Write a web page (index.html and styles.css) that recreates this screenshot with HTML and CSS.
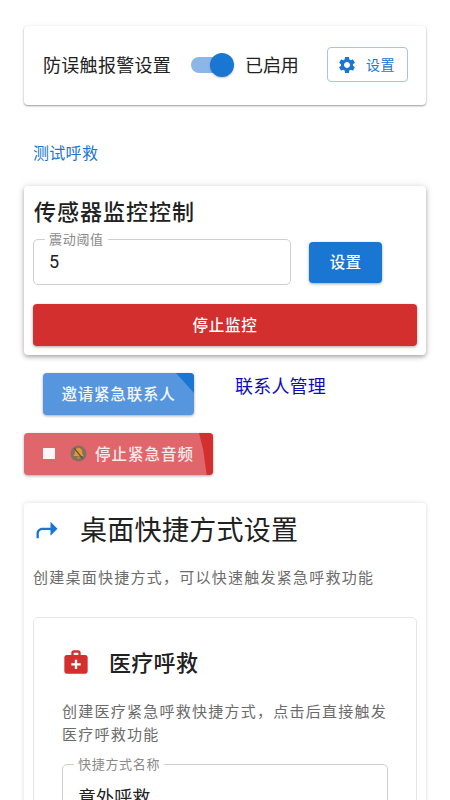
FILE: index.html
```html
<!DOCTYPE html>
<html lang="zh">
<head>
<meta charset="utf-8">
<title>设置</title>
<link rel="stylesheet" href="styles.css">
</head>
<body>
<main class="page">
  <section class="card alarm">
    <span class="alarm-title">防误触报警设置</span>
    <span class="switch"><span class="track"></span><span class="thumb"></span></span>
    <span class="alarm-state">已启用</span>
    <button class="outline-btn">
      <svg class="gear" viewBox="0 0 24 24"><path d="M19.14 12.94c.04-.3.06-.61.06-.94 0-.32-.02-.64-.07-.94l2.03-1.58c.18-.14.23-.41.12-.61l-1.92-3.32c-.12-.22-.37-.29-.59-.22l-2.39.96c-.5-.38-1.03-.7-1.62-.94l-.36-2.54c-.04-.24-.24-.41-.48-.41h-3.84c-.24 0-.43.17-.47.41l-.36 2.54c-.59.24-1.13.57-1.62.94l-2.39-.96c-.22-.08-.47 0-.59.22L2.74 8.87c-.12.21-.08.47.12.61l2.03 1.58c-.05.3-.09.63-.09.94s.02.64.07.94l-2.03 1.58c-.18.14-.23.41-.12.61l1.92 3.32c.12.22.37.29.59.22l2.39-.96c.5.38 1.03.7 1.62.94l.36 2.54c.05.24.24.41.48.41h3.84c.24 0 .44-.17.47-.41l.36-2.54c.59-.24 1.13-.56 1.62-.94l2.39.96c.22.08.47 0 .59-.22l1.92-3.32c.12-.22.07-.47-.12-.61l-2.01-1.58zM12 15.6c-1.98 0-3.6-1.62-3.6-3.6s1.62-3.6 3.6-3.6 3.6 1.62 3.6 3.6-1.62 3.6-3.6 3.6z"/></svg>
      <span>设置</span>
    </button>
  </section>

  <a class="test-link">测试呼救</a>

  <section class="card sensor">
    <h2 class="sensor-title">传感器监控控制</h2>
    <div class="threshold-row">
      <div class="field threshold">
        <span class="field-label">震动阈值</span>
        <span class="field-value num">5</span>
      </div>
      <button class="primary-btn">设置</button>
    </div>
    <button class="danger-btn">停止监控</button>
  </section>

  <div class="invite-row">
    <button class="invite-btn"><span class="corner-blue"></span>邀请紧急联系人</button>
    <a class="contacts-link">联系人管理</a>
  </div>

  <button class="stop-audio">
    <span class="corner-red"></span>
    <span class="stop-square"></span>
    <svg class="muted-bell" viewBox="0 0 18 18">
      <circle cx="9" cy="9" r="8.500" fill="#85705f"/>
      <path d="M9 3.2c-2.6 0-3.8 2-3.8 4.3 0 2.2-1 3.3-1.7 4.2h11c-.7-.9-1.7-2-1.7-4.2C12.800 5.200 11.600 3.200 9 3.200z" fill="#e09a35"/>
      <circle cx="9" cy="13.300" r="1.500" fill="#c9832a"/>
      <path d="M4.500 3.500l9 11" stroke="#5c4a42" stroke-width="1.300"/>
    </svg>
    <span class="stop-label">停止紧急音频</span>
  </button>

  <section class="card shortcuts">
    <header class="shortcut-head">
      <svg class="share-icon" viewBox="0 0 24 24"><path d="M21 11l-6-6v5H8c-2.760 0-5 2.240-5 5v4h2v-4c0-1.650 1.350-3 3-3h7v5l6-6z"/></svg>
      <h2 class="shortcut-title">桌面快捷方式设置</h2>
    </header>
    <p class="shortcut-desc">创建桌面快捷方式，可以快速触发紧急呼救功能</p>
    <div class="medical">
      <header class="medical-head">
        <svg class="medical-icon" viewBox="0 0 24 24"><path d="M20 6h-4V4c0-1.100-.9-2-2-2h-4c-1.100 0-2 .9-2 2v2H4c-1.100 0-2 .9-2 2v12c0 1.100.9 2 2 2h16c1.100 0 2-.9 2-2V8c0-1.100-.9-2-2-2zM10 4h4v2h-4V4zm6 11h-3v3h-2v-3H8v-2h3v-3h2v3h3v2z"/></svg>
        <h3 class="medical-title">医疗呼救</h3>
      </header>
      <p class="medical-desc">创建医疗紧急呼救快捷方式，点击后直接触发医疗呼救功能</p>
      <div class="field name-field">
        <span class="field-label">快捷方式名称</span>
        <span class="field-value">意外呼救</span>
      </div>
    </div>
  </section>
</main>
</body>
</html>
```
FILE: styles.css
```css
* { box-sizing: border-box; }
html, body { margin: 0; height: 100%; overflow: hidden; background: #fff; }
body {
  font-family: "Noto Sans CJK SC", Roboto, sans-serif;
  color: #212121;
}
button { font-family: inherit; border: 0; padding: 0; }
h2, h3, p { margin: 0; font-weight: 400; }

.page { display: flex; flex-direction: column; align-items: flex-start; padding: 26px 24px 0; height: 800px; overflow: hidden; }

.card {
  width: 402px;
  background: #fff;
  border-radius: 4px;
  flex: none;
}

.alarm {
  height: 79px;
  display: flex;
  align-items: center;
  padding: 0 19px 2px;
  box-shadow: 0 1px 2px rgba(0,0,0,.38), 0 0 6px rgba(0,0,0,.05);
}
.alarm-title { font-size: 18px; letter-spacing: .3px; width: 128px; white-space: nowrap; line-height: 24px; flex: none; padding-bottom: 2px; }
.switch { position: relative; width: 43px; height: 24px; margin-left: 20px; flex: none; }
.track { position: absolute; left: 0; right: 4px; top: 4px; height: 16px; border-radius: 8px; background: #8db6e8; }
.thumb { position: absolute; right: 0; top: 0; width: 24px; height: 24px; border-radius: 50%; background: #1976d2; box-shadow: 0 1px 2px rgba(0,0,0,.25); }
.alarm-state { font-size: 18px; margin-left: 11px; width: 53px; white-space: nowrap; letter-spacing: -.1px; line-height: 24px; flex: none; padding-bottom: 2px; }
.outline-btn {
  margin-left: 29px;
  width: 81px;
  height: 35px;
  flex: none;
  display: flex;
  align-items: center;
  background: #fff;
  border: 1px solid #a9c4df;
  border-radius: 4px;
  color: #1976d2;
  font-size: 14px;
  padding: 0 0 0 9px;
}
.gear { width: 20px; height: 20px; fill: #1976d2; flex: none; }
.outline-btn span { margin-left: 9px; letter-spacing: .5px; padding-bottom: 2px; }

.test-link { margin: 37px 0 0 9px; font-size: 16px; line-height: 20px; color: #1976d2; letter-spacing: .3px; }

.sensor {
  margin-top: 24px;
  height: 169px;
  padding: 10px 9px 0;
  box-shadow: 0 2px 4px rgba(0,0,0,.3), 0 0 10px rgba(0,0,0,.1);
}
.sensor-title { font-size: 22px; line-height: 28px; letter-spacing: 1px; margin-left: 1px; color: #212121; font-weight: 500; }
.threshold-row { display: flex; align-items: center; margin-top: 15px; }
.field { position: relative; background: #fff; border: 1px solid #cfcfcf; border-radius: 5px; }
.threshold { width: 258px; height: 46px; display: flex; align-items: center; padding-left: 15px; }
.field-label {
  position: absolute;
  left: 11px;
  top: -9px;
  padding: 0 4px;
  background: #fff;
  font-size: 13px;
  line-height: 16px;
  letter-spacing: .7px;
  color: #8a8a8a;
  white-space: nowrap;
}
.field-value { font-size: 18px; color: #212121; }
.num { font-family: Roboto, sans-serif; padding-bottom: 2px; }
.primary-btn {
  margin-left: 18px;
  width: 73px;
  height: 41px;
  padding-bottom: 2px;
  background: #1976d2;
  color: #fff;
  font-size: 15.500px;
  font-weight: 500;
  border-radius: 4px;
  letter-spacing: .3px;
  box-shadow: 0 1px 3px rgba(0,0,0,.35);
}
.danger-btn {
  display: block;
  width: 384px;
  height: 42px;
  margin-top: 19px;
  background: #d32f2f;
  color: #fff;
  font-size: 15.500px;
  font-weight: 500;
  letter-spacing: .8px;
  padding-bottom: 3px;
  border-radius: 4px;
  box-shadow: 0 1px 3px rgba(0,0,0,.35);
}

.invite-row { display: flex; align-items: flex-start; margin: 18px 0 0 19px; }
.invite-btn {
  position: relative;
  overflow: hidden;
  width: 151px;
  height: 42px;
  padding-bottom: 3px;
  background: #5596de;
  color: #f2f7fc;
  font-size: 15.500px;
  font-weight: 500;
  letter-spacing: .8px;
  border-radius: 4px;
  box-shadow: 0 1px 3px rgba(0,0,0,.35);
}
.corner-blue { position: absolute; top: 0; right: 0; width: 18px; height: 20px; background: #1976d2; clip-path: polygon(0 0, 100% 0, 100% 100%); }
.contacts-link { margin: 0 0 0 41px; font-size: 18px; line-height: 24px; color: #0d0db8; letter-spacing: .2px; }

.stop-audio {
  position: relative;
  overflow: hidden;
  flex: none;
  display: flex;
  align-items: center;
  width: 189px;
  height: 42px;
  margin-top: 18px;
  padding: 0 0 2px 19px;
  background: #e0666b;
  color: #f6eaea;
  font-size: 15.500px;
  font-weight: 500;
  border-radius: 4px;
  box-shadow: 0 1px 3px rgba(0,0,0,.35);
}
.corner-red { position: absolute; top: 0; right: 0; width: 14px; height: 42px; background: #d32f2f; clip-path: polygon(0 0, 100% 0, 100% 100%, 55% 100%, 30% 40%); }
.stop-square { width: 12px; height: 11px; background: #fbf6f6; flex: none; }
.muted-bell { width: 17px; height: 17px; margin-left: 15px; flex: none; }
.stop-label { margin-left: 8px; letter-spacing: 1px; white-space: nowrap; padding-bottom: 1px; }

.shortcuts {
  margin-top: 28px;
  height: 400px;
  padding: 8px 9px 0;
  box-shadow: 0 0 5px rgba(0,0,0,.14);
}
.shortcut-head { display: flex; align-items: center; height: 36px; }
.share-icon { width: 28px; height: 28px; fill: #1976d2; margin-left: 0; flex: none; position: relative; top: 1px; }
.shortcut-title { margin-left: 19px; font-size: 27px; line-height: 36px; letter-spacing: .3px; color: #212121; }
.shortcut-desc { margin-top: 18px; font-size: 15px; line-height: 24px; letter-spacing: 1.250px; color: #6b6b6b; white-space: nowrap; }
.medical {
  margin-top: 28px;
  width: 384px;
  height: 300px;
  padding: 27px 28px 0;
  border: 1px solid #e6e6e6;
  border-radius: 5px;
}
.medical-head { display: flex; align-items: center; height: 34px; }
.medical-icon { width: 28px; height: 28px; fill: #d32f2f; flex: none; }
.medical-title { margin-left: 19px; font-size: 22px; line-height: 30px; letter-spacing: .3px; color: #212121; font-weight: 500; padding-bottom: 2px; }
.medical-desc { margin-top: 20px; width: 326px; font-size: 15px; line-height: 23px; letter-spacing: 1.250px; color: #6b6b6b; }
.name-field { margin-top: 19px; width: 326px; height: 60px; padding: 14px 0 0 15px; }
.name-field .field-value { display: block; line-height: 34px; letter-spacing: .1px; }
```
